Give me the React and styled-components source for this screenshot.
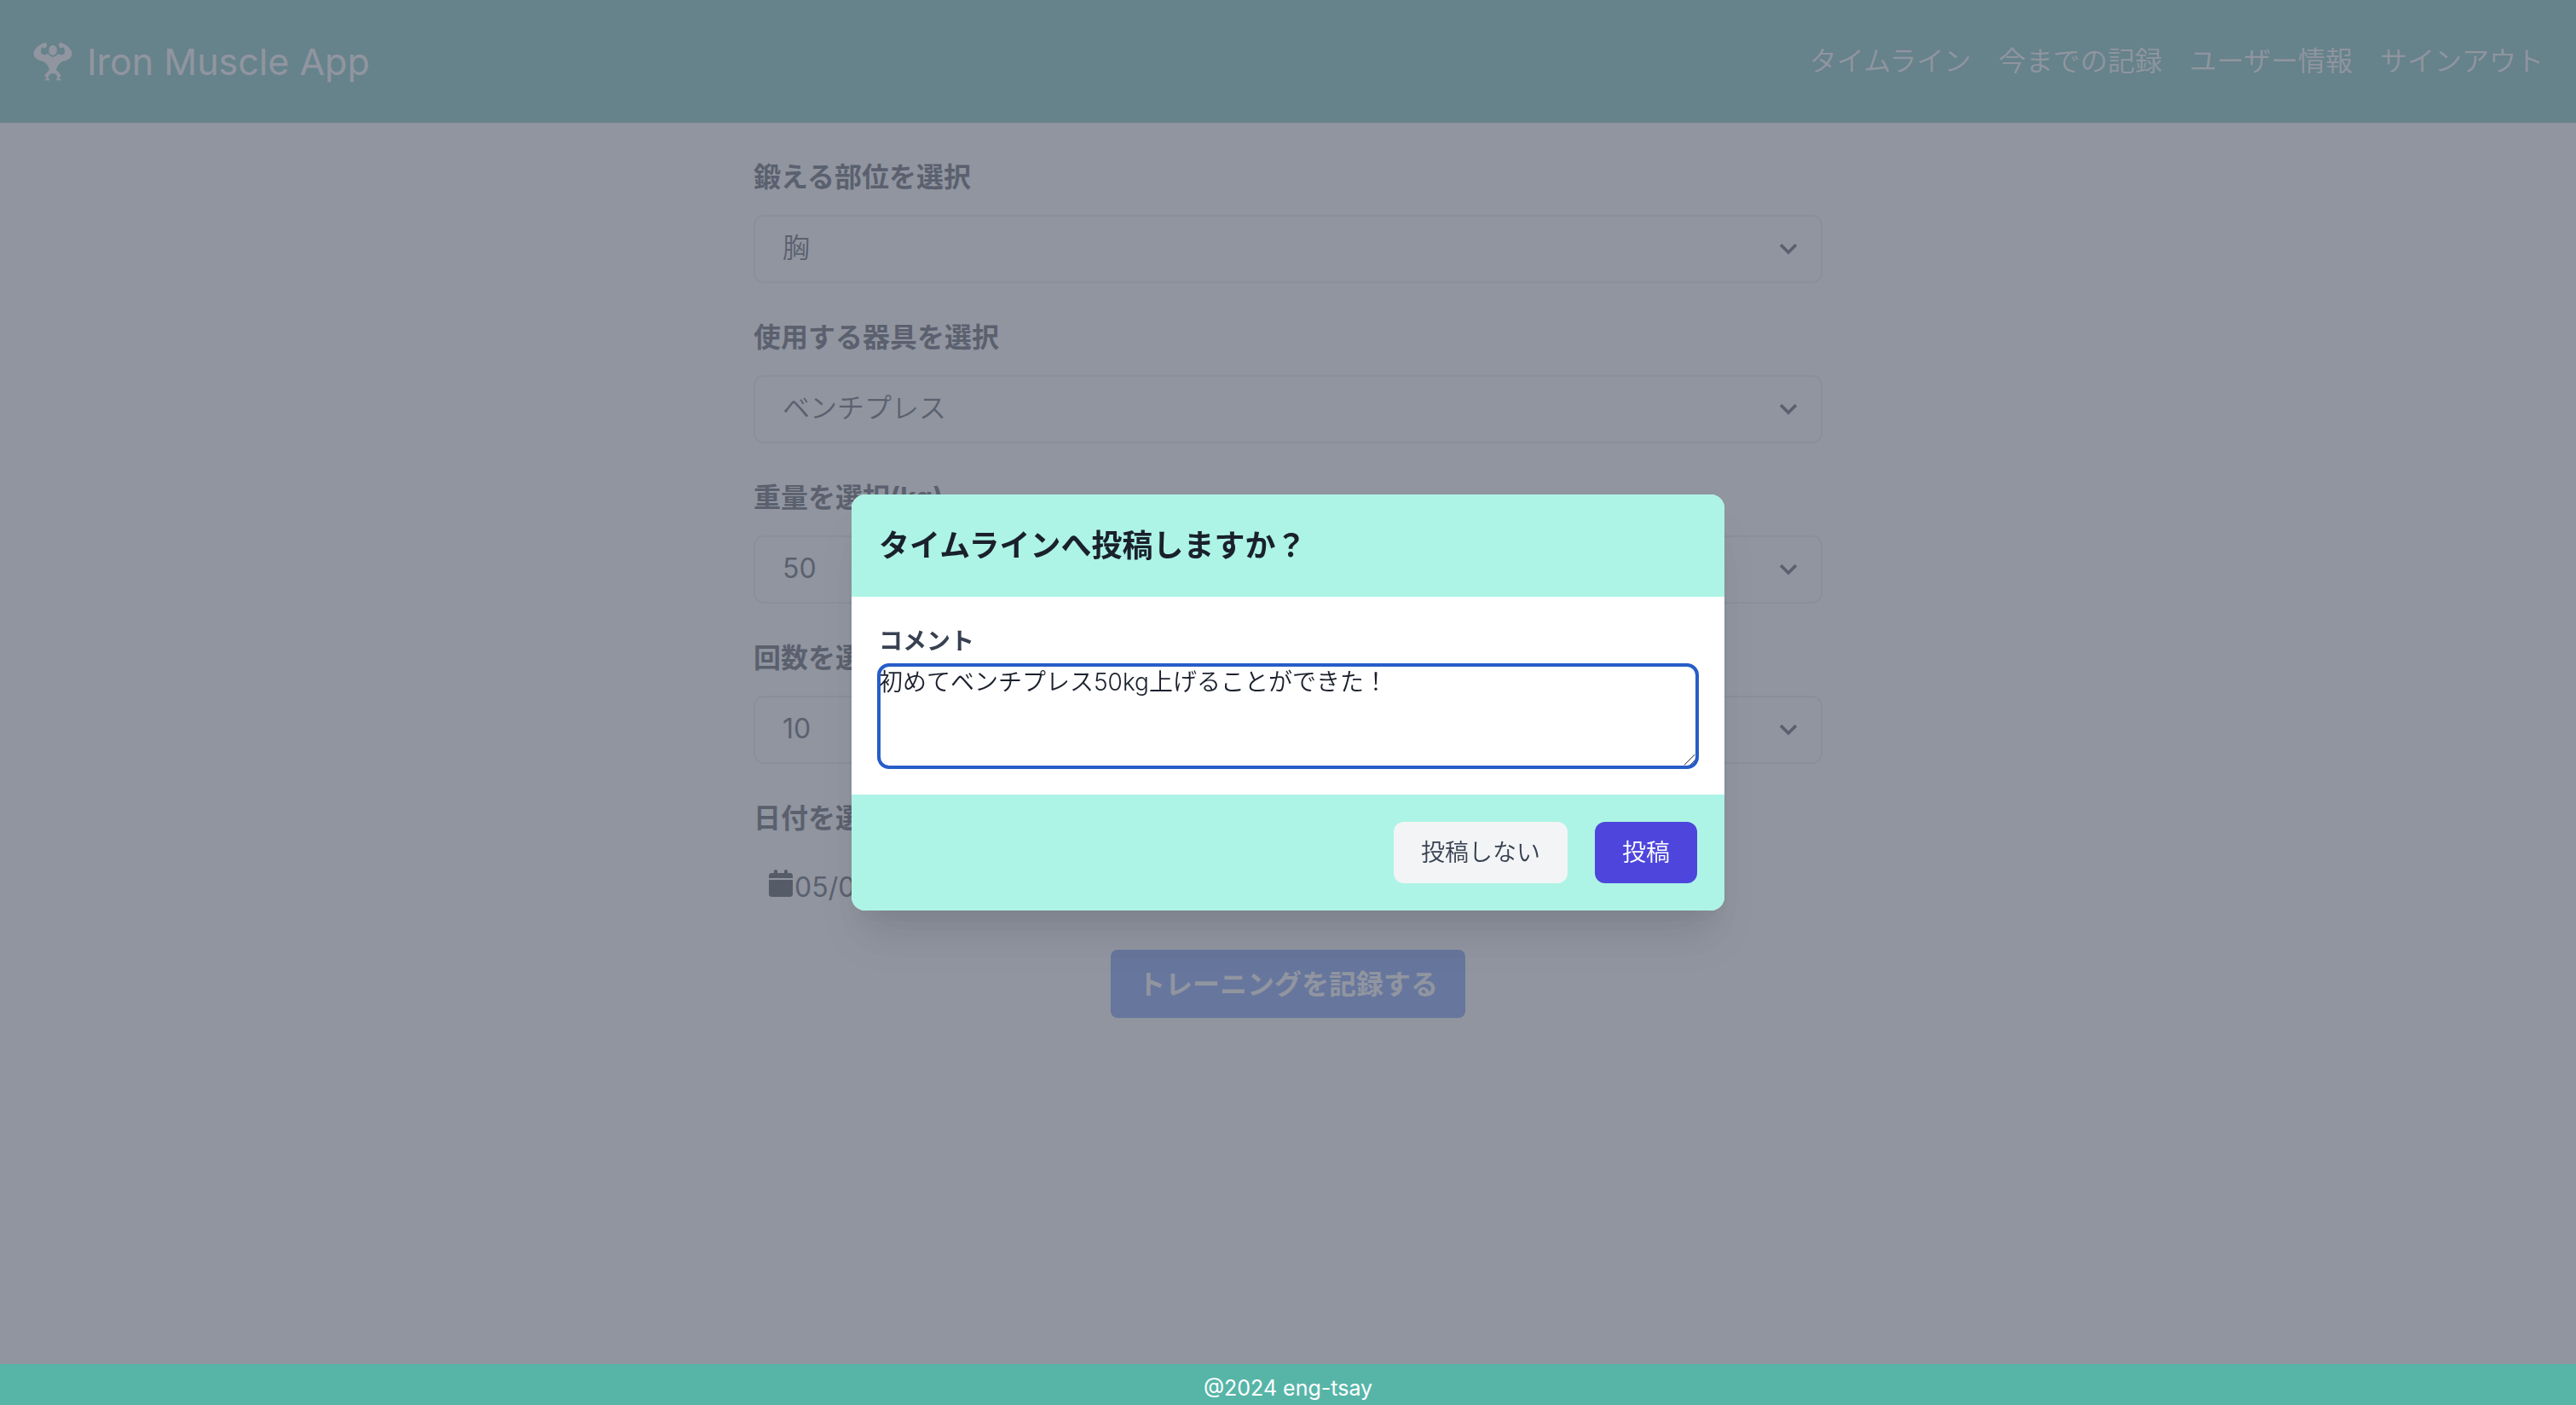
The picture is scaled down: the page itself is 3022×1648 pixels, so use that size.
import React from "react";
import styled, { createGlobalStyle } from "styled-components";
import { GiMuscleUp } from "react-icons/gi";
import { FaCalendar } from "react-icons/fa6";

const GlobalStyle = createGlobalStyle`
  *, *::before, *::after { box-sizing: border-box; }
  body { margin: 0; background: #fff; }
  body, button, select, textarea, input {
    font-family: Inter, "Noto Sans CJK JP", sans-serif;
    font-weight: 400;
  }
`;

const Page = styled.div`
  min-height: 100vh;
  display: flex;
  flex-direction: column;
  color: #2c2f3a;
  font-size: 32px;
  line-height: 48px;
`;

const Header = styled.header`
  display: flex;
  align-items: center;
  justify-content: space-between;
  height: 144px;
  padding: 0 38px;
  background: #57b5a8;
  color: #fff;
`;

const Brand = styled.a`
  display: flex;
  align-items: center;
  gap: 16px;
  color: inherit;
  text-decoration: none;
  font-size: 43px;
`;

const Nav = styled.nav`
  display: flex;
  gap: 32px;
`;

const NavLink = styled.a`
  color: inherit;
  text-decoration: none;
  font-weight: 350;
`;

const Form = styled.form`
  flex: 1;
  width: 100%;
  max-width: 1254px;
  margin: 0 auto;
  padding: 40px 0;
  display: flex;
  flex-direction: column;
  gap: 40px;
`;

const Field = styled.div`
  display: flex;
  flex-direction: column;
  gap: 20px;
`;

const FieldLabel = styled.label`
  font-weight: 700;
`;

const SelectBox = styled.div`
  display: grid;
  align-items: center;

  & > * { grid-area: 1 / 1; }
  & > svg {
    justify-self: end;
    margin-right: 22px;
    pointer-events: none;
  }
`;

const Select = styled.select`
  appearance: none;
  width: 100%;
  height: 80px;
  padding: 0 64px 4px 32px;
  border: 2px solid #e2e5ea;
  border-radius: 12px;
  background: #fff;
  color: inherit;
  font-size: 32px;
  font-weight: ${({ $numeric }) => ($numeric ? 400 : 350)};
`;

const DateRow = styled.div`
  display: flex;
  align-items: flex-start;
  gap: 2px;
  height: 70px;
  padding: 16px 0 0 18px;
`;

const CalendarIcon = styled(FaCalendar)`
  flex: none;
  width: 28px;
  height: 32px;
  color: #181a22;
`;

const DateInput = styled.input`
  flex: 1;
  height: 40px;
  padding: 0;
  border: 0;
  background: transparent;
  color: inherit;
  font-size: 32px;
`;

const SubmitButton = styled.button`
  align-self: center;
  height: 80px;
  padding: 0 32px 4px;
  border: 0;
  border-radius: 8px;
  background: #5c82ee;
  color: #fff;
  font-size: 32px;
  font-weight: 700;
`;

const Footer = styled.footer`
  position: relative;
  z-index: 2;
  height: 48px;
  padding-top: 8px;
  background: #57b5a8;
  color: #fff;
  font-size: 25px;
  line-height: 40px;
  text-align: center;
`;

const Overlay = styled.div`
  position: fixed;
  inset: 0;
  z-index: 1;
  display: flex;
  align-items: center;
  justify-content: center;
  background: rgba(107, 114, 128, 0.75);
`;

const Dialog = styled.section`
  width: 100%;
  max-width: 1024px;
  overflow: hidden;
  border-radius: 16px;
  background: #fff;
  box-shadow: 0 40px 50px -10px rgba(0, 0, 0, 0.1), 0 20px 20px -10px rgba(0, 0, 0, 0.04);
`;

const DialogHeader = styled.header`
  padding: 32px;
  background: #adf4e6;
`;

const DialogTitle = styled.h2`
  margin: 0;
  color: #1a202c;
  font-size: 36px;
  line-height: 56px;
  font-weight: 700;
`;

const DialogBody = styled.div`
  display: flex;
  flex-direction: column;
  gap: 8px;
  padding: 32px;
`;

const CommentLabel = styled.label`
  color: #374151;
  font-size: 28px;
  line-height: 40px;
  font-weight: 700;
`;

const Comment = styled.textarea`
  display: block;
  width: 100%;
  height: 120px;
  padding: 0;
  border: 0;
  border-radius: 12px;
  outline: 4px solid #275dc8;
  outline-offset: -2px;
  background: #fff;
  color: #1a202c;
  font-size: 28px;
  font-weight: 350;
  line-height: 40px;
  resize: vertical;

  &::-webkit-resizer {
    background: linear-gradient(
      135deg,
      transparent 37%, #555 39%, #555 42%, transparent 44%,
      transparent 60%, #555 62%, #555 65%, transparent 67%
    );
  }
`;

const DialogActions = styled.footer`
  display: flex;
  justify-content: flex-end;
  gap: 32px;
  padding: 32px;
  background: #adf4e6;
`;

const ActionButton = styled.button`
  padding: 16px 32px;
  border: 0;
  border-radius: 12px;
  background: ${({ $primary }) => ($primary ? "#4e46dc" : "#f3f4f6")};
  color: ${({ $primary }) => ($primary ? "#fff" : "#374151")};
  font-size: 28px;
  font-weight: 350;
  line-height: 40px;
`;

const Chevron = () => (
  <svg width="36" height="36" viewBox="0 0 20 20" fill="currentColor" aria-hidden="true">
    <path d="M9.293 12.95l.707.707L15.657 8l-1.414-1.414L10 10.828 5.757 6.586 4.343 8z" />
  </svg>
);

const links = ["タイムライン", "今までの記録", "ユーザー情報", "サインアウト"];

const fields = [
  { id: "part", label: "鍛える部位を選択", value: "胸" },
  { id: "machine", label: "使用する器具を選択", value: "ベンチプレス" },
  { id: "weight", label: "重量を選択(kg)", value: "50", numeric: true },
  { id: "reps", label: "回数を選択", value: "10", numeric: true },
];

export default function App() {
  return (
    <>
      <GlobalStyle />
      <Page lang="ja">
        <Header>
          <Brand href="#">
            <GiMuscleUp size={48} />
            <span>Iron Muscle App</span>
          </Brand>
          <Nav>
            {links.map((text) => (
              <NavLink href="#" key={text}>{text}</NavLink>
            ))}
          </Nav>
        </Header>

        <Form onSubmit={(e) => e.preventDefault()}>
          {fields.map(({ id, label, value, numeric }) => (
            <Field key={id}>
              <FieldLabel htmlFor={id}>{label}</FieldLabel>
              <SelectBox>
                <Select id={id} defaultValue={value} $numeric={numeric}>
                  <option>{value}</option>
                </Select>
                <Chevron />
              </SelectBox>
            </Field>
          ))}
          <Field>
            <FieldLabel htmlFor="date">日付を選択</FieldLabel>
            <DateRow>
              <CalendarIcon />
              <DateInput id="date" type="text" defaultValue="05/0" />
            </DateRow>
          </Field>
          <SubmitButton type="submit">トレーニングを記録する</SubmitButton>
        </Form>

        <Footer>@2024 eng-tsay</Footer>
      </Page>

      <Overlay>
        <Dialog role="dialog" aria-modal="true" aria-labelledby="dialog-title" lang="ja">
          <DialogHeader>
            <DialogTitle id="dialog-title">タイムラインへ投稿しますか？</DialogTitle>
          </DialogHeader>
          <DialogBody>
            <CommentLabel htmlFor="comment">コメント</CommentLabel>
            <Comment id="comment" defaultValue="初めてベンチプレス50kg上げることができた！" />
          </DialogBody>
          <DialogActions>
            <ActionButton type="button">投稿しない</ActionButton>
            <ActionButton type="button" $primary>投稿</ActionButton>
          </DialogActions>
        </Dialog>
      </Overlay>
    </>
  );
}
